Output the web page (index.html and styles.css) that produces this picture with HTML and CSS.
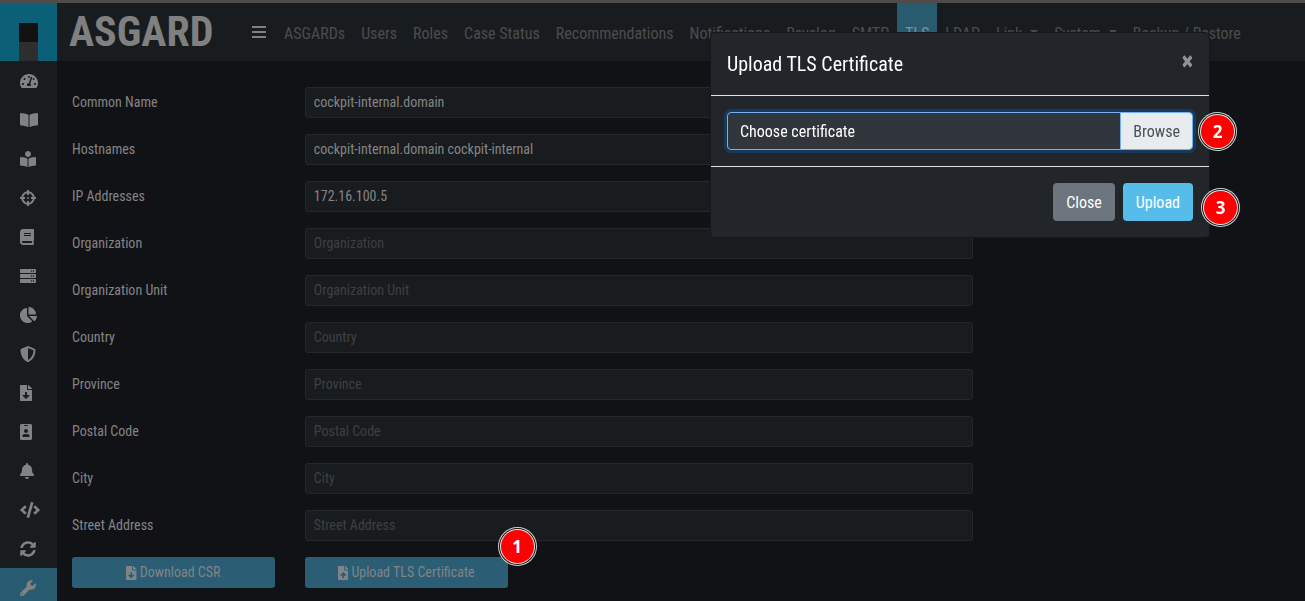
FILE: index.html
```html
<!DOCTYPE html>
<html lang="en">
<head>
<meta charset="utf-8">
<meta name="viewport" content="width=device-width, initial-scale=1">
<title>ASGARD - TLS</title>
<link rel="stylesheet" href="styles.css">
</head>
<body>
<div class="app">
  <aside class="sidebar">
    <a class="mark" href="#" aria-label="Home"><svg viewBox="0 0 57 57"><path fill="#121212" d="M19 19h19v19H19z"/><path fill="#2e2e2e" d="M19 38h19v19H19z"/></svg></a>
    <nav class="side-nav" aria-label="Sections">
      <a href="#" aria-label="Dashboard"><svg viewBox="0 0 576 512"><path d="M288 32C128.940 32 0 160.940 0 320c0 52.800 14.250 102.260 39.060 144.800 5.610 9.620 16.300 15.200 27.440 15.200h443c11.140 0 21.830-5.580 27.440-15.200C561.750 422.260 576 372.800 576 320c0-159.060-128.940-288-288-288zm0 64c14.710 0 26.580 10.130 30.320 23.650-1.110 2.260-2.640 4.230-3.450 6.670l-9.220 27.670c-5.130 3.490-10.970 6.010-17.640 6.010-17.670 0-32-14.330-32-32S270.330 96 288 96zM96 384c-17.670 0-32-14.330-32-32s14.330-32 32-32 32 14.330 32 32-14.330 32-32 32zm48-160c-17.670 0-32-14.330-32-32s14.330-32 32-32 32 14.330 32 32-14.330 32-32 32zm246.770-72.410l-61.330 184C343.130 347.330 352 364.540 352 384c0 11.720-3.380 22.550-8.880 32H232.880c-5.500-9.450-8.880-20.280-8.880-32 0-33.940 26.500-61.430 59.900-63.590l61.340-184.010c4.170-12.560 17.730-19.450 30.360-15.170 12.570 4.190 19.350 17.790 15.170 30.360zm14.660 57.200l15.520-46.550c3.470-1.290 7.130-2.230 11.050-2.230 17.670 0 32 14.330 32 32s-14.330 32-32 32c-11.380-.010-20.890-6.280-26.570-15.220zM480 384c-17.670 0-32-14.330-32-32s14.330-32 32-32 32 14.330 32 32-14.330 32-32 32z"/></svg></a>
      <a href="#" aria-label="Documentation"><svg viewBox="0 0 576 512"><path d="M542 32c-55 3-164 14-231 56-5 3-7 8-7 13v364c0 11 12 18 22 13 69-35 170-45 219-47 17-1 31-15 31-31V64c0-18-15-33-34-32zM265 88C198 46 89 35 34 32 15 31 0 46 0 64v336c0 17 13 30 30 31 50 3 150 13 220 48 10 5 22-2 22-13V100c0-5-2-10-7-12z"/></svg></a>
      <a href="#" aria-label="Playbooks"><svg viewBox="0 0 512 512"><path d="M352 96c0-53-43-96-96-96s-96 43-96 96 43 96 96 96 96-43 96-96zM233 241c-41-28-107-47-206-49-15 0-27 12-27 26v224c0 14 12 26 27 26 67 1 158 7 208 42 3 2 5 0 5-3V253c0-5-3-9-7-12zm252-49c-99 2-165 21-206 49-4 3-7 7-7 12v254c0 4 3 5 6 3 50-35 140-41 207-42 15 0 27-12 27-26V218c0-14-12-26-27-26z"/></svg></a>
      <a href="#" aria-label="Scan control"><svg viewBox="0 0 512 512"><path fill-rule="evenodd" d="M500 224h-30C456 130 382 56 288 42V12c0-7-5-12-12-12h-40c-7 0-12 5-12 12v30C130 56 56 130 42 224H12c-7 0-12 5-12 12v40c0 7 5 12 12 12h30c14 94 88 168 182 182v30c0 7 5 12 12 12h40c7 0 12-5 12-12v-30c94-14 168-88 182-182h30c7 0 12-5 12-12v-40c0-7-5-12-12-12zM288 405v-41c0-7-5-12-12-12h-40c-7 0-12 5-12 12v41c-59-13-104-59-117-117h41c7 0 12-5 12-12v-40c0-7-5-12-12-12h-41c13-59 59-104 117-117v41c0 7 5 12 12 12h40c7 0 12-5 12-12v-41c59 13 104 59 117 117h-41c-7 0-12 5-12 12v40c0 7 5 12 12 12h41c-13 59-59 104-117 117zM288 256a32 32 0 1 1-64 0 32 32 0 0 1 64 0z"/></svg></a>
      <a href="#" aria-label="Rules"><svg viewBox="0 0 448 512"><path fill-rule="evenodd" d="M448 360V24c0-13-11-24-24-24H96C43 0 0 43 0 96v320c0 53 43 96 96 96h328c13 0 24-11 24-24v-16c0-7-3-14-9-19-4-15-4-59 0-74 6-4 9-11 9-19zM128 134c0-3 3-6 6-6h212c3 0 6 3 6 6v20c0 3-3 6-6 6H134c-3 0-6-3-6-6v-20zm0 64c0-3 3-6 6-6h212c3 0 6 3 6 6v20c0 3-3 6-6 6H134c-3 0-6-3-6-6v-20zm253 250H96c-18 0-32-14-32-32s14-32 32-32h285c-2 17-2 47 0 64z"/></svg></a>
      <a href="#" aria-label="Assets"><svg viewBox="0 0 512 512"><path fill-rule="evenodd" d="M480 160H32c-18 0-32-14-32-32V64c0-18 14-32 32-32h448c18 0 32 14 32 32v64c0 18-14 32-32 32zm-48-88a24 24 0 1 0 0 48 24 24 0 0 0 0-48zm-64 0a24 24 0 1 0 0 48 24 24 0 0 0 0-48zm112 248H32c-18 0-32-14-32-32v-64c0-18 14-32 32-32h448c18 0 32 14 32 32v64c0 18-14 32-32 32zm-48-88a24 24 0 1 0 0 48 24 24 0 0 0 0-48zm-64 0a24 24 0 1 0 0 48 24 24 0 0 0 0-48zm112 248H32c-18 0-32-14-32-32v-64c0-18 14-32 32-32h448c18 0 32 14 32 32v64c0 18-14 32-32 32zm-48-88a24 24 0 1 0 0 48 24 24 0 0 0 0-48zm-64 0a24 24 0 1 0 0 48 24 24 0 0 0 0-48z"/></svg></a>
      <a href="#" aria-label="Reports"><svg viewBox="0 0 544 512"><path d="M528 288H290l158 158c6 6 16 7 22 1 39-36 66-86 74-141 1-10-6-18-16-18zm-16-67C504 101 408 8 289 0c-9-1-17 7-17 16v224h224c9 0 17-8 16-17v-2zM224 288V50c0-10-8-17-18-16C87 51-4 155 0 280c5 128 115 233 243 232 51-1 98-17 136-44 8-6 9-17 2-24L224 288z"/></svg></a>
      <a href="#" aria-label="Protection"><svg viewBox="0 0 512 512"><path fill-rule="evenodd" d="M466 84L274 4c-11-5-25-5-37 0L45 84c-18 7-29 24-29 44 0 198 115 336 221 380 12 5 26 5 37 0 86-35 222-158 222-380 0-20-12-37-30-44zM256 446V66l176 73c-3 151-82 262-176 307z"/></svg></a>
      <a href="#" aria-label="Downloads"><svg viewBox="0 0 384 512"><path fill-rule="evenodd" d="M224 136V0H24C11 0 0 11 0 24v464c0 13 11 24 24 24h336c13 0 24-11 24-24V160H248c-13 0-24-11-24-24zm76 210L204 441c-6 7-17 7-24 0L84 346c-10-10-3-27 11-27h65v-79c0-9 7-16 16-16h32c9 0 16 7 16 16v79h65c14 0 21 17 11 27zm77-241L279 7c-5-4-11-7-17-7h-6v128h128v-6c0-6-2-12-7-17z"/></svg></a>
      <a href="#" aria-label="Licensing"><svg viewBox="0 0 384 512"><path fill-rule="evenodd" d="M336 0H48C22 0 0 22 0 48v416c0 26 22 48 48 48h288c27 0 48-22 48-48V48c0-26-21-48-48-48zM144 32h96c9 0 16 7 16 16s-7 16-16 16h-96c-9 0-16-7-16-16s7-16 16-16zm48 128a64 64 0 1 1 0 128 64 64 0 0 1 0-128zm112 237c0 10-10 19-22 19H102c-12 0-22-9-22-19v-19c0-32 30-58 67-58h5c26 11 54 11 80 0h5c37 0 67 26 67 58v19z"/></svg></a>
      <a href="#" aria-label="Alerts"><svg viewBox="0 0 448 512"><path d="M224 512c35 0 64-29 64-64H160c0 35 29 64 64 64zm215-150c-19-21-55-52-55-154 0-78-54-140-128-155V32a32 32 0 1 0-64 0v21C118 68 64 130 64 208c0 102-36 133-55 154-6 6-9 14-9 22 0 16 13 32 32 32h384c19 0 32-16 32-32 0-8-3-16-9-22z"/></svg></a>
      <a href="#" aria-label="API"><svg viewBox="0 0 640 512"><path d="M279 512l-61-18c-6-2-10-9-8-15L346 9c2-7 9-10 15-9l61 18c6 2 10 9 8 15L294 503c-2 7-9 10-15 9zM165 400l43-47c5-5 4-12-1-17l-91-80 91-80c5-5 6-12 1-17l-43-47c-5-5-12-5-17 0L4 247c-5 5-5 13 0 18l144 135c5 5 12 5 17 0zm327 0l144-135c5-5 5-13 0-18L492 112c-5-5-12-5-17 0l-43 47c-5 5-4 12 1 17l91 80-91 80c-5 5-6 12-1 17l43 47c5 5 12 5 17 0z"/></svg></a>
      <a href="#" aria-label="Updates"><svg viewBox="0 0 512 512"><path d="M371 133c-31-29-72-45-115-45-78 0-144 53-163 126-1 6-6 10-12 10H24c-8 0-14-7-12-14C34 94 135 8 256 8c66 0 127 26 171 69l36-36c15-15 41-4 41 17v134c0 13-11 24-24 24H346c-21 0-32-26-17-41l42-42zM32 296h134c21 0 32 26 17 41l-42 42c31 29 72 45 115 45 78 0 144-53 163-126 1-6 6-10 12-10h57c8 0 14 7 12 14-22 116-123 202-244 202-66 0-127-26-171-69l-36 36c-15 15-41 4-41-17V320c0-13 11-24 24-24z"/></svg></a>
      <a class="active" href="#" aria-label="Settings"><svg viewBox="0 0 512 512"><path fill-rule="evenodd" d="M507 115c-2-9-13-12-20-5l-74 74-68-11-11-68 74-74c7-7 4-18-5-20-51-13-107 1-147 41-42 42-54 104-37 158L19 410a64 64 0 1 0 91 91l199-200c54 18 116 6 159-37 40-40 53-97 39-149zM64 472a24 24 0 1 1 0-48 24 24 0 0 1 0 48z"/></svg></a>
    </nav>
  </aside>
  <div class="page">
    <header class="topbar">
      <a class="brand" href="#">ASGARD</a>
      <button class="menu" type="button" aria-label="Toggle menu"><svg viewBox="0 0 14 12"><path d="M0 0h14v2H0zM0 5h14v2H0zM0 10h14v2H0z"/></svg></button>
      <nav class="tabs" aria-label="Settings">
        <a href="#">ASGARDs</a><a href="#">Users</a><a href="#">Roles</a><a href="#">Case Status</a><a href="#">Recommendations</a><a href="#">Notifications</a><a href="#">Rsyslog</a><a href="#">SMTP</a><a class="active" href="#">TLS</a><a href="#">LDAP</a><a class="drop" href="#">Link</a><a class="drop" href="#">System</a><a href="#">Backup / Restore</a>
      </nav>
    </header>
    <main class="content">
      <form class="form">
        <label for="cn">Common Name</label><input id="cn" type="text" value="cockpit-internal.domain">
        <label for="hosts">Hostnames</label><input id="hosts" type="text" value="cockpit-internal.domain cockpit-internal">
        <label for="ips">IP Addresses</label><input id="ips" type="text" value="172.16.100.5">
        <label for="org">Organization</label><input id="org" type="text" placeholder="Organization">
        <label for="unit">Organization Unit</label><input id="unit" type="text" placeholder="Organization Unit">
        <label for="country">Country</label><input id="country" type="text" placeholder="Country">
        <label for="province">Province</label><input id="province" type="text" placeholder="Province">
        <label for="postal">Postal Code</label><input id="postal" type="text" placeholder="Postal Code">
        <label for="city">City</label><input id="city" type="text" placeholder="City">
        <label for="street">Street Address</label><input id="street" type="text" placeholder="Street Address">
        <button class="action" type="button"><svg viewBox="0 0 384 512"><path fill-rule="evenodd" d="M224 136V0H24C11 0 0 11 0 24v464c0 13 11 24 24 24h336c13 0 24-11 24-24V160H248c-13 0-24-11-24-24zm76 210L204 441c-6 7-17 7-24 0L84 346c-10-10-3-27 11-27h65v-79c0-9 7-16 16-16h32c9 0 16 7 16 16v79h65c14 0 21 17 11 27zm77-241L279 7c-5-4-11-7-17-7h-6v128h128v-6c0-6-2-12-7-17z"/></svg>Download CSR</button>
        <button class="action" type="button"><svg viewBox="0 0 384 512"><path fill-rule="evenodd" d="M224 136V0H24C11 0 0 11 0 24v464c0 13 11 24 24 24h336c13 0 24-11 24-24V160H248c-13 0-24-11-24-24zm65 216h-65v80c0 9-7 16-16 16h-32c-9 0-16-7-16-16v-80H95c-14 0-21-17-11-27l96-96c7-7 18-7 24 0l96 96c10 10 3 27-11 27zm88-247L279 7c-5-4-11-7-17-7h-6v128h128v-6c0-6-2-12-7-17z"/></svg>Upload TLS Certificate<span class="step step-one">1</span></button>
      </form>
    </main>
  </div>
</div>
<section class="modal" role="dialog" aria-labelledby="modal-title">
  <header class="modal-head">
    <h2 id="modal-title">Upload TLS Certificate</h2>
    <button class="close" type="button" aria-label="Dismiss">×</button>
  </header>
  <div class="modal-body">
    <label class="file"><input type="file"><span class="file-name">Choose certificate</span><span class="file-browse">Browse</span></label>
    <span class="step step-two">2</span>
  </div>
  <footer class="modal-foot">
    <button class="btn" type="button">Close</button>
    <button class="btn primary" type="button">Upload</button>
    <span class="step step-three">3</span>
  </footer>
</section>
</body>
</html>
```

FILE: styles.css
```css
* { box-sizing: border-box; }
body {
  margin: 0;
  height: 100vh;
  overflow: hidden;
  border-top: 3px solid #4d4c4b;
  background: #111216;
  color: #848485;
  font: 14px/21px "Roboto Condensed", "Liberation Sans Narrow", Roboto, sans-serif;
}
a { color: inherit; text-decoration: none; }
button, input { font: inherit; color: inherit; }
svg { display: block; fill: currentColor; }

.app { display: flex; }
.sidebar { width: 57px; flex: none; background: #191c1e; color: #828282; }
.mark { display: block; height: 58px; padding-top: 1px; background: #0b6078; }
.side-nav a { display: flex; align-items: center; height: 39px; padding-left: 20px; }
.side-nav svg { height: 16px; }
.side-nav .active { height: 40px; background: #285b6f; }

.page { flex: 1; min-width: 0; }
.topbar {
  display: flex;
  align-items: center;
  height: 58px;
  padding-left: 12px;
  background: #191c1e;
  color: #4b4c4e;
  font-size: 16px;
  line-height: 24px;
}
.brand {
  width: 140px;
  color: #808080;
  font: bold 42px/58px "Roboto Condensed", "Liberation Sans Narrow", sans-serif;
}
.menu { margin: 0 10px 0 43px; padding: 0; border: 0; background: none; color: #808080; }
.menu svg { width: 14px; height: 12px; }
.tabs { display: flex; align-self: stretch; white-space: nowrap; }
.tabs a { display: flex; align-items: center; padding: 4px 8px 0; }
.tabs .active { background: #285b6f; color: #808d93; }
.drop::after {
  content: "";
  margin: 0 0 4px 8px;
  border: 4px solid transparent;
  border-top-color: currentColor;
  border-bottom: 0;
}

.content { padding: 26px 15px 0; }
.form {
  display: grid;
  grid-template-columns: repeat(12, 1fr);
  gap: 16px 30px;
  width: 74%;
}
.form label { grid-column: span 3; padding-top: 5px; }
.form input {
  grid-column: span 9;
  height: 31px;
  min-width: 0;
  padding: 3px 8px 5px;
  border: 1px solid #25272a;
  border-radius: 3px;
  background: #191c1e;
}
.form input::placeholder { color: #3c4043; opacity: 1; }
.action {
  position: relative;
  grid-column: span 3;
  display: flex;
  align-items: center;
  justify-content: center;
  gap: 3px;
  height: 31px;
  padding: 0;
  border: 0;
  border-radius: 3px;
  background: #2b5e75;
  color: #808487;
  white-space: nowrap;
}
.action svg { height: 14px; }

.modal {
  position: fixed;
  top: 33px;
  right: 96px;
  width: 498px;
  border-radius: 4px;
  background: #222529;
  box-shadow: 0 0 0 1px #15171a;
  color: #fff;
  font-size: 16px;
  line-height: 24px;
}
.modal-head {
  display: flex;
  justify-content: space-between;
  padding: 16px;
  border-bottom: 1px solid #dee2e6;
}
.modal-head h2 { margin: 0; font-size: 20px; font-weight: 400; line-height: 30px; }
.close {
  padding: 0;
  border: 0;
  background: none;
  color: #909294;
  font-size: 24px;
  font-weight: 700;
  line-height: 24px;
  text-shadow: 0 1px 0 #909294;
  align-self: flex-start;
}
.modal-body { position: relative; padding: 16px; border-bottom: 1px solid #dee2e6; }
.file {
  position: relative;
  display: flex;
  height: 38px;
  border: 1px solid #75b1f0;
  border-radius: 4px;
  background: #31353c;
  box-shadow: 0 0 0 3px #17395c;
  overflow: hidden;
}
.file input { position: absolute; inset: 0; opacity: 0; }
.file-name { flex: 1; padding: 7px 12px 5px; }
.file-browse {
  padding: 7px 12px 5px;
  border-left: 1px solid #75b1f0;
  background: #e9ecef;
  color: #495057;
}
.modal-foot { position: relative; display: flex; justify-content: flex-end; gap: 8px; padding: 16px; }
.btn {
  height: 38px;
  padding: 2px 13px 0;
  border: 0;
  border-radius: 4px;
  background: #6c757d;
  color: #fff;
}
.primary { background: #56bdeb; }

.step {
  position: absolute;
  display: grid;
  place-items: center;
  width: 33px;
  height: 33px;
  border-radius: 50%;
  background: #f00;
  color: #fff;
  font: bold 17px/24px "Open Sans", "Noto Sans", sans-serif;
  box-shadow: 0 0 0 1px #e6e6e6, 0 0 0 2px #111, 0 0 0 3px #d0d0d0;
}
.step-one { top: -27px; right: -26px; }
.step-two { top: 19px; right: -25px; }
.step-three { top: 24px; right: -28px; }
```
